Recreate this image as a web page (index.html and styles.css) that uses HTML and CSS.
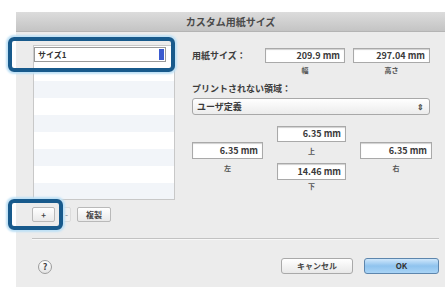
FILE: index.html
```html
<!DOCTYPE html>
<html lang="ja">
<head>
<meta charset="utf-8">
<link rel="stylesheet" href="styles.css">
</head>
<body>
<div class="dialog">
  <div class="titlebar">カスタム用紙サイズ</div>
  <div class="content">
    <div class="left">
      <div class="list">
        <div class="row edit"><div class="field">サイズ1<span class="sel"></span></div></div>
        <div class="row"></div><div class="row alt"></div><div class="row"></div><div class="row alt"></div>
        <div class="row"></div><div class="row alt"></div><div class="row"></div><div class="row alt"></div>
      </div>
      <div class="listbtns">
        <div class="sbtn plus">+</div>
        <div class="sbtn minus">-</div>
        <div class="sbtn dup">複製</div>
      </div>
    </div>
    <div class="right">
      <div class="sizerow">
        <div class="lbl">用紙サイズ：</div>
        <div class="inp w1">209.9 mm</div>
        <div class="inp w2">297.04 mm</div>
      </div>
      <div class="subrow">
        <div class="sub s1">幅</div>
        <div class="sub s2">高さ</div>
      </div>
      <div class="lbl area">プリントされない領域：</div>
      <div class="select"><span>ユーザ定義</span><span class="arr">⇕</span></div>
      <div class="margins">
        <div class="inp m top">6.35 mm</div>
        <div class="inp m lft">6.35 mm</div>
        <div class="sub c-top">上</div>
        <div class="inp m rgt">6.35 mm</div>
        <div class="sub c-l">左</div>
        <div class="inp m bot">14.46 mm</div>
        <div class="sub c-r">右</div>
        <div class="sub c-b">下</div>
      </div>
    </div>
  </div>
  <div class="sep"></div>
  <div class="footer">
    <div class="help">?</div>
    <div class="btns">
      <div class="btn cancel">キャンセル</div>
      <div class="btn ok">OK</div>
    </div>
  </div>
  <div class="hl hl1"></div>
  <div class="hl hl2"></div>
</div>
</body>
</html>
```
FILE: styles.css
```css
html, body {
  margin: 0;
  padding: 0;
  background: #ffffff;
  width: 445px;
  height: 287px;
  overflow: hidden;
  font-family: "Noto Sans CJK JP", "Noto Sans", sans-serif;
  color: #3a3a3a;
}
.dialog {
  position: relative;
  margin: 12px 0 0 16px;
  width: 429px;
  height: 275px;
  background: #ececec;
}
.titlebar {
  height: 20px;
  line-height: 19px;
  text-align: center;
  font-size: 10px;
  font-weight: 700;
  color: #4a4a4a;
  background: linear-gradient(#dcdcdc, #c4c4c4);
  border-bottom: 1px solid #b4b4b4;
  box-sizing: border-box;
}
.content {
  display: flex;
  align-items: flex-start;
  padding: 13px 0 0 17px;
}
.left {
  width: 142px;
  display: flex;
  flex-direction: column;
  flex-shrink: 0;
}
.list {
  height: 155px;
  flex-shrink: 0;
  background: #fff;
  border: 1px solid #c8c8c8;
  box-sizing: border-box;
  overflow: hidden;
}
.row {
  height: 17px;
}
.row.alt {
  background: #f2f5f9;
}
.row.edit {
  padding: 1px 8px 0 0;
  height: 17px;
}
.field {
  position: relative;
  height: 13px;
  border: 1px solid #9a9a9a;
  background: #fff;
  font-size: 8px;
  font-weight: 700;
  line-height: 13px;
  padding-left: 3px;
  box-sizing: content-box;
  color: #333;
}
.sel {
  position: absolute;
  right: 1px;
  top: 1px;
  width: 5px;
  height: 11px;
  background: #3b5bd0;
}
.listbtns {
  display: flex;
  align-items: center;
  margin-top: 7px;
  margin-left: -1px;
}
.sbtn {
  height: 15px;
  box-sizing: border-box;
  font-size: 8px;
  font-weight: 700;
  line-height: 13px;
  text-align: center;
  border: 1px solid #b9b9b9;
  border-radius: 2px;
  background: linear-gradient(#ffffff, #e9e9e9);
  color: #444;
}
.plus { width: 23px; }
.minus { width: 9px; margin-left: 7px; border-color: #dcdcdc; color: #999; background: #f1f1f1; }
.dup { width: 34px; margin-left: 6px; }
.right {
  margin-left: 17px;
  width: 240px;
  display: flex;
  flex-direction: column;
}
.sizerow {
  display: flex;
  align-items: center;
  margin-top: 3px;
  height: 15px;
}
.lbl {
  font-size: 9px;
  font-weight: 700;
  color: #3c3c3c;
}
.sizerow .lbl { width: 73px; }
.inp {
  height: 15px;
  box-sizing: border-box;
  border: 1px solid #a9a9a9;
  background: #fff;
  box-shadow: inset 0 1px 1px #d0d0d0;
  font-size: 9px;
  font-weight: 700;
  line-height: 13px;
  text-align: right;
  padding-right: 4px;
  color: #3a3a3a;
}
.w1 { width: 80px; }
.w2 { width: 77px; margin-left: 8px; }
.subrow {
  display: flex;
  height: 14px;
  align-items: center;
}
.sub {
  font-size: 7px;
  font-weight: 700;
  color: #555;
  text-align: center;
}
.s1 { width: 80px; margin-left: 73px; }
.s2 { width: 77px; margin-left: 8px; }
.area {
  margin-top: 5px;
  height: 13px;
  line-height: 13px;
}
.select {
  margin-top: 3px;
  width: 238px;
  height: 17px;
  box-sizing: border-box;
  border: 1px solid #a8a8a8;
  border-radius: 3px;
  background: linear-gradient(#ffffff, #ececec);
  display: flex;
  justify-content: space-between;
  align-items: center;
  padding: 0 5px 0 4px;
  font-size: 9px;
  font-weight: 700;
  color: #3a3a3a;
}
.arr {
  font-size: 8px;
  color: #555;
}
.margins {
  margin-top: 11px;
  display: grid;
  grid-template-columns: 71px 69px 72px;
  column-gap: 14px;
  grid-template-rows: 16px 18px 20px 12px;
}
.m { height: 16px; line-height: 14px; }
.top { grid-column: 2; grid-row: 1; align-self: start; }
.lft { grid-column: 1; grid-row: 2; height: 17px; line-height: 15px; }
.c-top { grid-column: 2; grid-row: 2; align-self: center; }
.rgt { grid-column: 3; grid-row: 2; height: 17px; line-height: 15px; }
.c-l { grid-column: 1; grid-row: 3; align-self: start; margin-top: 3px; }
.bot { grid-column: 2; grid-row: 3; align-self: end; height: 17px; line-height: 15px; }
.c-r { grid-column: 3; grid-row: 3; align-self: start; margin-top: 3px; }
.c-b { grid-column: 2; grid-row: 4; align-self: center; }
.sep {
  margin: 16px 6px 0 16px;
  height: 1px;
  background: #c2c2c2;
  border-bottom: 1px solid #f8f8f8;
}
.footer {
  display: flex;
  align-items: center;
  justify-content: space-between;
  padding: 0 6px 0 22px;
  margin-top: 17px;
}
.help {
  width: 14px;
  height: 14px;
  border-radius: 50%;
  border: 1px solid #9c9c9c;
  background: linear-gradient(#ffffff, #e4e4e4);
  box-sizing: border-box;
  font-size: 9px;
  font-weight: 700;
  line-height: 12px;
  text-align: center;
  color: #444;
  margin-top: 3px;
}
.btns {
  display: flex;
  gap: 11px;
}
.btn {
  height: 16px;
  box-sizing: border-box;
  border-radius: 3px;
  font-size: 8px;
  font-weight: 700;
  line-height: 14px;
  text-align: center;
}
.cancel {
  width: 72px;
  border: 1px solid #a9a9a9;
  background: linear-gradient(#ffffff, #e8e8e8);
  color: #444;
}
.ok {
  width: 75px;
  border: 1px solid #5d86ad;
  background: linear-gradient(#cfe7fb, #8fc3ee 50%, #a9d4f6);
  color: #333;
}
.hl {
  position: absolute;
  border: 4px solid #185a8c;
  border-radius: 6px;
  box-shadow: 0 0 2px 2px #bfe1f6;
  box-sizing: border-box;
}
.hl1 { left: -8px; top: 25px; width: 167px; height: 35px; }
.hl2 { left: -8px; top: 187px; width: 55px; height: 31px; }
```
